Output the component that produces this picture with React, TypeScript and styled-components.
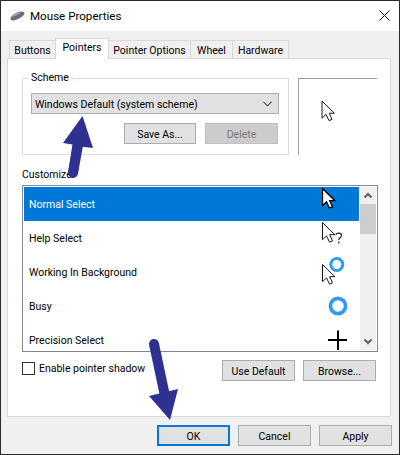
import React from "react";
import styled, { createGlobalStyle } from "styled-components";

const Global = createGlobalStyle`
  html, body { margin: 0; padding: 0; background: #f0f0f0; }
  * { box-sizing: border-box; }
`;

const Win = styled.div`
  position: relative;
  width: 400px;
  height: 455px;
  overflow: hidden;
  display: flex;
  flex-direction: column;
  background: #f0f0f0;
  border: 1px solid #2b2b2b;
  font-family: Roboto, "Open Sans", sans-serif;
  font-size: 10.5px;
  line-height: 16px;
  color: #000;
  white-space: nowrap;
`;

const TitleBar = styled.div`
  flex: none;
  height: 30px;
  background: #fff;
  display: flex;
  align-items: center;
  padding: 0 9px 0 9px;
  gap: 5px;
  font-size: 11.6px;
`;

const TitleText = styled.span`
  flex: 1;
`;

const CloseIcon = styled.svg`
  margin-top: -2px;
`;

const Body = styled.div`
  flex: 1;
  display: flex;
  flex-direction: column;
  padding: 7px 7px 0 6px;
`;

const TabRow = styled.div`
  flex: none;
  height: 21px;
  display: flex;
  align-items: flex-end;
  padding-left: 3px;
  position: relative;
  z-index: 1;
  margin-bottom: -1px;
`;

const Tab = styled.div<{ $active?: boolean; $w: number }>`
  width: ${p => p.$w}px;
  height: ${p => (p.$active ? 21 : 19)}px;
  text-align: center;
  background: ${p => (p.$active ? "#fff" : "#f0f0f0")};
  border: 1px solid #d9d9d9;
  border-bottom: ${p => (p.$active ? "none" : "1px solid #d9d9d9")};
  margin-left: -1px;
  line-height: ${p => (p.$active ? 18 : 20)}px;
  z-index: ${p => (p.$active ? 2 : 0)};
`;

const Panel = styled.div`
  width: 384px;
  height: 359px;
  background: #fff;
  border: 1px solid #d9d9d9;
  padding: 11px 13px 0 14px;
  display: flex;
  flex-direction: column;
`;

const TopRow = styled.div`
  display: flex;
  align-items: flex-start;
`;

const Group = styled.fieldset`
  width: 267px;
  height: 85px;
  margin: 0;
  padding: 0 8px;
  border: 1px solid #dcdcdc;
  display: flex;
  flex-direction: column;
`;

const Legend = styled.legend`
  margin-left: -2px;
  padding: 0 2px;
  line-height: 16px;
`;

const Combo = styled.div`
  height: 21px;
  width: 248px;
  margin-top: 7px;
  background: #e1e1e1;
  border: 1px solid #adadad;
  display: flex;
  align-items: center;
  justify-content: space-between;
  padding: 0 6px 0 3px;
`;

const Label = styled.span`
  padding-top: 2px;
`;

const GroupButtons = styled.div`
  display: flex;
  justify-content: flex-end;
  gap: 9px;
  margin-top: 9px;
  padding-right: 2px;
`;

const Btn = styled.div<{ $disabled?: boolean; $default?: boolean; $w?: number }>`
  width: ${p => p.$w ?? 73}px;
  height: 21px;
  padding-top: 2px;
  display: flex;
  align-items: center;
  justify-content: center;
  background: ${p => (p.$disabled ? "#cccccc" : "#e1e1e1")};
  color: ${p => (p.$disabled ? "#7a7a7a" : "#000")};
  border: ${p => (p.$default ? "2px solid #0078d7" : p.$disabled ? "1px solid #bfbfbf" : "1px solid #adadad")};
`;

const Preview = styled.div`
  width: 79px;
  height: 77px;
  margin: 8px 0 0 9px;
  border-top: 1px solid #a0a0a0;
  border-left: 1px solid #a0a0a0;
  display: flex;
  align-items: flex-start;
  padding: 21px 0 0 22px;
`;

const CustomizeLabel = styled.div`
  margin-top: 11px;
  height: 16px;
  line-height: 18px;
`;

const ListBox = styled.div`
  width: 356px;
  height: 167px;
  margin-top: 3px;
  border: 1px solid #828790;
  padding: 1px;
  display: flex;
  background: #fff;
`;

const Rows = styled.div`
  flex: none;
  width: 335px;
  height: 163px;
  overflow: hidden;
`;

const Row = styled.div<{ $selected?: boolean }>`
  height: 34px;
  display: flex;
  align-items: center;
  justify-content: space-between;
  padding: 0 5px;
  background: ${p => (p.$selected ? "#0078d7" : "#fff")};
  color: ${p => (p.$selected ? "#fff" : "#000")};
`;

const RowIcon = styled.svg`
  flex: none;
  display: block;
  width: 32px;
  height: 34px;
`;

const ScrollBar = styled.div`
  flex: none;
  width: 16px;
  height: 163px;
  margin-left: 1px;
  background: #f0f0f0;
  display: flex;
  flex-direction: column;
`;

const ScrollEnd = styled.svg`
  flex: none;
  display: block;
  width: 16px;
  height: 17px;
`;

const Thumb = styled.div`
  height: 30px;
  background: #cdcdcd;
`;

const ScrollFill = styled.div`
  flex: 1;
`;

const BelowList = styled.div`
  display: flex;
  align-items: flex-start;
  margin-top: 8px;
  height: 21px;
`;

const CheckLabel = styled.div`
  display: flex;
  align-items: center;
  gap: 4px;
  flex: 1;
  margin-top: -1px;
`;

const Check = styled.div`
  width: 13px;
  height: 13px;
  border: 1px solid #333;
  background: #fff;
`;

const BelowButtons = styled.div`
  display: flex;
  gap: 8px;
  padding-right: 1px;
`;

const Footer = styled.div`
  display: flex;
  justify-content: flex-end;
  gap: 8px;
  margin-top: 8px;
`;

const Arrow = styled.svg<{ $x: number; $y: number }>`
  position: absolute;
  left: ${p => p.$x}px;
  top: ${p => p.$y}px;
  pointer-events: none;
`;

const ARROW = "M0 0V17.2L4 13.4L7 19.6L10 18.4L7.2 12.2H12.4Z";

const Cursor = ({ x, y, thick, fill = "#fff" }: { x: number; y: number; thick?: boolean; fill?: string }) => (
  <path
    d={ARROW}
    transform={`translate(${x} ${y})`}
    fill={fill}
    stroke="#000"
    strokeWidth={thick ? 1.3 : 0.9}
    strokeLinejoin="miter"
  />
);

const BLUE = "#2f9bf0";
const INK = "#2e3192";

export default function App() {
  return (
    <Win>
      <Global />
      <TitleBar>
        <svg width="15" height="10" viewBox="0 0 15 10">
          <path d="M0.5 7.5C1 4.5 7 1 11 0.6C13.5 0.4 14.8 1.6 14.4 3C13.6 5.2 7 9.4 3 9.4C1 9.4 0.3 8.8 0.5 7.5Z" fill="#6a6f76" />
          <path d="M1.5 6C4 3.4 8 1.6 11 1.2C9 3 5 5.4 1.5 6Z" fill="#aab0b6" />
        </svg>
        <TitleText>Mouse Properties</TitleText>
        <CloseIcon width="11" height="11" viewBox="0 0 11 11">
          <path d="M0.5 0.5L10.5 10.5M10.5 0.5L0.5 10.5" stroke="#111" strokeWidth="1" fill="none" />
        </CloseIcon>
      </TitleBar>
      <Body>
        <TabRow>
          <Tab $w={47}>Buttons</Tab>
          <Tab $active $w={54}>Pointers</Tab>
          <Tab $w={83}>Pointer Options</Tab>
          <Tab $w={43}>Wheel</Tab>
          <Tab $w={57}>Hardware</Tab>
        </TabRow>
        <Panel>
          <TopRow>
            <Group>
              <Legend>Scheme</Legend>
              <Combo>
                <Label>Windows Default (system scheme)</Label>
                <svg width="9" height="6" viewBox="0 0 9 6">
                  <path d="M0.5 0.8L4.5 4.8L8.5 0.8" stroke="#444" strokeWidth="1.1" fill="none" />
                </svg>
              </Combo>
              <GroupButtons>
                <Btn $w={72}>Save As...</Btn>
                <Btn $disabled>Delete</Btn>
              </GroupButtons>
            </Group>
            <Preview>
              <svg width="14" height="22" viewBox="-1 -1 14 22">
                <Cursor x={0} y={0} />
              </svg>
            </Preview>
          </TopRow>
          <CustomizeLabel>Customize:</CustomizeLabel>
          <ListBox>
            <Rows>
              <Row $selected>
                <Label>Normal Select</Label>
                <RowIcon viewBox="0 0 32 34">
                  <Cursor x={0.5} y={1.5} thick />
                </RowIcon>
              </Row>
              <Row>
                <Label>Help Select</Label>
                <RowIcon viewBox="0 0 32 34">
                  <Cursor x={0.5} y={1.5} />
                  <path d="M14 14C14 11.5 19.5 11.5 19.5 14.5C19.5 16.5 16.8 16.5 16.8 19M16.8 20.5V22.5" stroke="#222" strokeWidth="1.2" fill="none" />
                </RowIcon>
              </Row>
              <Row>
                <Label>Working In Background</Label>
                <RowIcon viewBox="0 0 32 34">
                  <Cursor x={0.5} y={9.5} />
                  <circle cx="14.8" cy="9.5" r="6" fill="none" stroke={BLUE} strokeWidth="3" />
                </RowIcon>
              </Row>
              <Row>
                <Label>Busy</Label>
                <RowIcon viewBox="0 0 32 34">
                  <circle cx="16" cy="17" r="7.6" fill="none" stroke={BLUE} strokeWidth="3.6" />
                </RowIcon>
              </Row>
              <Row>
                <Label>Precision Select</Label>
                <RowIcon viewBox="0 0 32 34">
                  <path d="M6 17H25M16 7.5V27" stroke="#000" strokeWidth="2" fill="none" />
                </RowIcon>
              </Row>
            </Rows>
            <ScrollBar>
              <ScrollEnd viewBox="0 0 16 17">
                <path d="M4.5 10.5L8 7L11.5 10.5" stroke="#606060" strokeWidth="2" fill="none" />
              </ScrollEnd>
              <Thumb />
              <ScrollFill />
              <ScrollEnd viewBox="0 0 16 17">
                <path d="M4.5 6.5L8 10L11.5 6.5" stroke="#606060" strokeWidth="2" fill="none" />
              </ScrollEnd>
            </ScrollBar>
          </ListBox>
          <BelowList>
            <CheckLabel>
              <Check />
              <Label>Enable pointer shadow</Label>
            </CheckLabel>
            <BelowButtons>
              <Btn>Use Default</Btn>
              <Btn>Browse...</Btn>
            </BelowButtons>
          </BelowList>
        </Panel>
        <Footer>
          <Btn $default>OK</Btn>
          <Btn>Cancel</Btn>
          <Btn>Apply</Btn>
        </Footer>
      </Body>
      <Arrow $x={55} $y={110} width="45" height="75" viewBox="0 0 45 75">
        <path d="M26.5 5L37 37L24.5 35.5L22 62L12 62L16.5 33.5L7 32Z" fill={INK} />
        <path d="M17 62L22 34" stroke={INK} strokeWidth="10" strokeLinecap="round" fill="none" />
      </Arrow>
      <Arrow $x={142} $y={335} width="45" height="90" viewBox="0 0 45 90">
        <path d="M11 8L22 60" stroke={INK} strokeWidth="10" strokeLinecap="round" fill="none" />
        <path d="M6 60L35 53L27 84Z" fill={INK} />
      </Arrow>
    </Win>
  );
}
